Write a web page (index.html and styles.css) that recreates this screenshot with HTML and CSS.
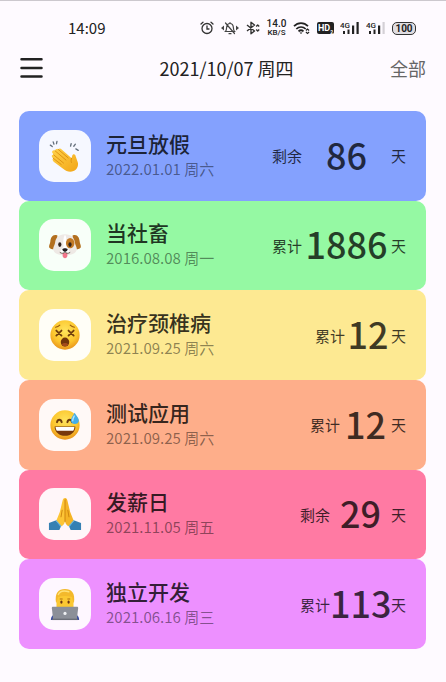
FILE: index.html
```html
<!DOCTYPE html>
<html lang="zh-CN">
<head>
    <meta charset="UTF-8">
    <meta name="viewport" content="width=device-width, initial-scale=1.0">
    <title>倒数日</title>
    <link rel="stylesheet" href="styles.css">
</head>
<body>
    <div class="status-bar">
        <span class="clock">14:09</span>
        <div class="status-icons">
            <svg width="14" height="14" viewBox="0 0 14 14" fill="none" stroke="#333" stroke-width="1.3" stroke-linecap="round">
                <circle cx="7" cy="7.5" r="5"/>
                <path d="M1 3L3 1.2M13 3L11 1.2M7 5v3h2"/>
            </svg>
            <svg width="20" height="14" viewBox="0 0 20 14" fill="none" stroke="#444" stroke-width="1.2" stroke-linecap="round">
                <path d="M5.5 10.5c1-1 1-2 1.200-4.500C7 3.500 8.500 2.500 10 2.500S13 3.500 13.300 6c.2 2.500.2 3.500 1.200 4.500zM9 12.700h2M10 1.500v1M5.500 2l9 10.500"/>
                <path d="M4 4.500L1 7l3 2.500zM16 4.500L19 7l-3 2.500z" fill="#444" stroke="none"/>
            </svg>
            <svg width="14" height="14" viewBox="0 0 14 14" fill="none" stroke="#333" stroke-width="1.4" stroke-linejoin="round">
                <path d="M1 4l7.500 6L5 12.700V1.300L8.500 4 1 10"/>
                <path d="M10.200 5.500l1.500-1.500 1.500 1.500M10.200 8.500l1.500 1.500 1.500-1.500"/>
            </svg>
            <div class="net-speed"><span>14.0</span><span class="unit">KB/S</span></div>
            <svg width="18" height="14" viewBox="0 0 18 14" fill="none" stroke="#222" stroke-width="1.700">
                <path d="M1 5.200C5 1 11 1 15 5.200M3.300 8C6 5.300 10 5.300 12.700 8M5.500 10.400c1.500-1.400 3.500-1.400 5 0"/>
                <path d="M6.500 11.500L8 13l1.500-1.500z" fill="#222" stroke="none"/>
                <path d="M12.900 9.500l1.600-1.500 1.600 1.500M12.900 11l1.600 1.500 1.600-1.500" stroke-width="1.100"/>
            </svg>
            <span class="hd">HD<sub>2</sub></span>
            <svg class="signal" width="20" height="14" viewBox="0 0 20 14" fill="#222">
                <text x="0" y="7">4G</text>
                <path d="M3 10h2v3H3zM7.500 8.500h2V13h-2zM12 4.500h2.200V13H12zM16.500 1h2.200v12h-2.200z"/>
            </svg>
            <svg class="signal" width="20" height="14" viewBox="0 0 20 14" fill="#222">
                <text x="0" y="7">4G</text>
                <path d="M3 10h2v3H3zM7.500 8.500h2V13h-2zM12 4.500h2.200V13H12z"/>
                <path d="M16.500 1h2.200v12h-2.200z" fill="#d4d0d6"/>
            </svg>
            <span class="battery">100</span>
        </div>
    </div>

    <header class="top-bar">
        <button class="menu-btn" aria-label="菜单">
            <svg width="23" height="22" viewBox="0 0 23 22" stroke="#222" stroke-width="2.500" stroke-linecap="round">
                <path d="M1.500 2.200h20M1.500 11h20M1.500 19.500h20"/>
            </svg>
        </button>
        <h1 class="today">2021/10/07 周四</h1>
        <button class="filter-btn">全部</button>
    </header>

    <ul class="day-list">
        <li class="day blue">
            <div class="icon">
                <svg width="34" height="34" viewBox="0 0 36 36">
                    <defs>
                        <linearGradient id="hand" x1="0" y1="0" x2="1" y2="1">
                            <stop offset="0" stop-color="#ffd34a"/>
                            <stop offset="1" stop-color="#f2a516"/>
                        </linearGradient>
                    </defs>
                    <path d="M4.500 19.500c-1.300-1.500 0-3.300 1.700-2.500L4.500 14.500c-.8-2 1.500-3.300 3-2 0-1.800 2-2.500 3.300-1.500 1-1.300 2.600-1 3.700 0l10.500 9.300.7-2.800c.9-2.200 3.300-1.700 3.500.6l2.300 6.400c1.200 3.500-1 8-4.500 9.500-4 1.500-7.500.3-11-2.500L6 24c-1.500-1.300-1.500-3-.3-3.500z" fill="url(#hand)"/>
                    <path d="M6 16.800l10.500 8.700M7.500 12.500l11.500 9.800M10.800 11l10.500 9M5.700 20.500l8.300 6.500M25 20.300c-.7 1.500-.7 3-.2 4.500" fill="none" stroke="#d98b0c" stroke-width=".9" stroke-linecap="round"/>
                    <path d="M2.500 6.500l2 1.500M5.500 3l.8 2.500M9.500 2.500l-.5 2.500M24.500 5l-.6 2.500M29 5.500l-1.700 2.200M29.500 10.500l2.500 1.500" stroke="#66717d" stroke-width="1.400" stroke-linecap="round"/>
                </svg>
            </div>
            <div class="info">
                <h2>元旦放假</h2>
                <p>2022.01.01 周六</p>
            </div>
            <div class="count"><span>剩余</span><strong class="w-xl">86</strong><span>天</span></div>
        </li>
        <li class="day green">
            <div class="icon">
                <svg width="34" height="34" viewBox="0 0 36 36">
                    <path d="M10 8C5 6 3 10 2.500 14c-.5 3.500-2 5-1 7 2 2.500 6 1.500 7.500-1zM26 8c5-2 7 2 7.500 6 .5 3.500 2 5 1 7-2 2.500-6 1.500-7.500-1z" fill="#b3701f"/>
                    <path d="M18 6.500c-7 0-10 4-10.500 9-.5 3-2.500 5-2 7.500 1 4 6 6 12.500 6s11.500-2 12.500-6c.5-2.500-1.500-4.500-2-7.500-.5-5-3.500-9-10.500-9z" fill="#eee9e5"/>
                    <path d="M18 7c-2 3-2 8-1.500 12 .3 2-4 4-3 7 2 2 7 2 9 0 1-3-3-5-3-7 0-5 .5-9-1.500-12z" fill="#fff"/>
                    <ellipse cx="23.500" cy="16" rx="4.500" ry="5.500" fill="#c27a25"/>
                    <ellipse cx="12.500" cy="17.500" rx="1.700" ry="2.500" fill="#30231e"/>
                    <ellipse cx="23.300" cy="17.500" rx="1.700" ry="2.500" fill="#30231e"/>
                    <path d="M15.500 26.500h5v3c0 3.300-5 3.300-5 0z" fill="#f2768b"/>
                    <path d="M12.500 25.800c2 1.500 4.500 1.200 5.500-.5 1 1.700 3.500 2 5.500.5" fill="none" stroke="#594941" stroke-width=".9"/>
                    <path d="M15.300 22.300c1-1.300 4.400-1.300 5.400 0 .5 1.300-1.700 3-2.700 3s-3.200-1.700-2.700-3z" fill="#211c20"/>
                </svg>
            </div>
            <div class="info">
                <h2>当社畜</h2>
                <p>2016.08.08 周一</p>
            </div>
            <div class="count"><span>累计</span><strong class="w-xl">1886</strong><span>天</span></div>
        </li>
        <li class="day yellow">
            <div class="icon">
                <svg width="34" height="34" viewBox="0 0 36 36">
                    <defs>
                        <radialGradient id="face" cx=".5" cy=".35" r=".65">
                            <stop offset="0" stop-color="#ffe45c"/>
                            <stop offset=".65" stop-color="#fcc62e"/>
                            <stop offset="1" stop-color="#e9951c"/>
                        </radialGradient>
                    </defs>
                    <circle cx="18" cy="18" r="15.500" fill="url(#face)"/>
                    <path d="M8.800 13.300l5.500 5.400M14.300 13.300l-5.500 5.400M21.700 13.300l5.500 5.400M27.200 13.300l-5.500 5.400" stroke="#6e3c0b" stroke-width="1.900" stroke-linecap="round"/>
                    <path d="M8 9.800c1.500-.3 3.200-1 4.500-2.200M28 9.800c-1.500-.3-3.200-1-4.500-2.200" fill="none" stroke="#9c5c0e" stroke-width="1.200" stroke-linecap="round"/>
                    <ellipse cx="18" cy="25.500" rx="4.500" ry="4.800" fill="#71350b"/>
                    <path d="M14.500 28c1.800-2 5.200-2 7 0-1.500 2.800-5.500 2.800-7 0z" fill="#a34b1b"/>
                </svg>
            </div>
            <div class="info">
                <h2>治疗颈椎病</h2>
                <p>2021.09.25 周六</p>
            </div>
            <div class="count"><span>累计</span><strong class="w-sm">12</strong><span>天</span></div>
        </li>
        <li class="day orange">
            <div class="icon">
                <svg width="34" height="34" viewBox="0 0 36 36">
                    <circle cx="18" cy="18" r="15.500" fill="url(#face)"/>
                    <path d="M9.500 15c.8-3.500 4.200-3.500 5 0M20.500 15c.8-3.500 4.200-3.500 5 0" fill="none" stroke="#6e3c0b" stroke-width="2" stroke-linecap="round"/>
                    <path d="M7 19.500h22c0 6-5 10-11 10s-11-4-11-10z" fill="#77380c"/>
                    <path d="M8 20h20c-.2 2-.7 3.300-1.500 4.200h-17C8.700 23.300 8.200 22 8 20z" fill="#fff"/>
                    <path d="M28.200 5c-1.500 3-4 5.500-4 8.300 0 5 8.500 5 8.500 0 0-2.800-3-5.300-4.500-8.300z" fill="#42aeea"/>
                    <path d="M27.800 8.500c-1 2-1.800 3.300-1.600 5" fill="none" stroke="#b6e6fb" stroke-width="1.400" stroke-linecap="round"/>
                </svg>
            </div>
            <div class="info">
                <h2>测试应用</h2>
                <p>2021.09.25 周六</p>
            </div>
            <div class="count"><span>累计</span><strong class="w-md">12</strong><span>天</span></div>
        </li>
        <li class="day pink">
            <div class="icon">
                <svg width="34" height="34" viewBox="0 0 36 36">
                    <path d="M1 27.500l7-2.500 6 5.500-2 4.500H1zM35 27.500L28 25l-6 5.500 2 4.500h11z" fill="#3580b3"/>
                    <path d="M8 25l2-1.300 5 5.300-1.500 3zM28 25l-2-1.300-5 5.300 1.500 3z" fill="#66b3dc"/>
                    <path d="M18 1c-1.500 0-2.300 1.200-2.600 3L12.500 16l-3.500 8.500 5.500 6.500c2.500-1.300 3.300-3.500 3.500-6z" fill="#fdc536"/>
                    <path d="M18 1c1.500 0 2.300 1.200 2.600 3L23.500 16l3.500 8.500-5.500 6.500c-2.500-1.300-3.300-3.500-3.500-6z" fill="#f5b425"/>
                    <path d="M18 3v23M15 14l-1.200 7M21 14l1.200 7" fill="none" stroke="#c77c0b" stroke-width=".9" stroke-linecap="round"/>
                </svg>
            </div>
            <div class="info">
                <h2>发薪日</h2>
                <p>2021.11.05 周五</p>
            </div>
            <div class="count"><span>剩余</span><strong class="w-lg">29</strong><span>天</span></div>
        </li>
        <li class="day purple">
            <div class="icon">
                <svg width="34" height="34" viewBox="0 0 36 36">
                    <path d="M3 35c0-4 2-6 6-6.500h18c4 .5 6 2.500 6 6.500z" fill="#3a4da0"/>
                    <path d="M9 12C9 2 27 2 27 12v9c-1 4-4 7-9 7s-8-3-9-7z" fill="#fbc832"/>
                    <path d="M8.500 17C7 6 11 2 18 2s11 4 9.500 15c-1.200-1.500-1.500-3.500-2-6.500-5-1.300-10-1.300-15 0-.5 3-.8 5-2 6.500z" fill="#f3b92c"/>
                    <path d="M11 8c1.500-3.500 6-4.500 11-3" fill="none" stroke="#ffe27a" stroke-width="1.500" stroke-linecap="round"/>
                    <path d="M12.500 12.700h3M20.500 12.700h3" stroke="#a9680e" stroke-width="1"/>
                    <ellipse cx="14.200" cy="16" rx="1.200" ry="1.700" fill="#6b3413"/>
                    <ellipse cx="21.800" cy="16" rx="1.200" ry="1.700" fill="#6b3413"/>
                    <path d="M5.500 21h25c1 0 1.500.5 1.400 1.500L30.500 35h-25L4.100 22.500C4 21.500 4.500 21 5.500 21z" fill="#8b8f98"/>
                    <path d="M4.500 33.500h27V35h-27z" fill="#6b6f78"/>
                    <circle cx="18" cy="28" r="1.700" fill="#eef0f3"/>
                </svg>
            </div>
            <div class="info">
                <h2>独立开发</h2>
                <p>2021.06.16 周三</p>
            </div>
            <div class="count"><span>累计</span><strong class="w-lg">113</strong><span>天</span></div>
        </li>
    </ul>
</body>
</html>
```
FILE: styles.css
```css
* {
    box-sizing: border-box;
    margin: 0;
    padding: 0;
}
body {
    display: flex;
    flex-direction: column;
    min-height: 100vh;
    padding: 13px 20px 33px 19px;
    border-top: 1px solid #ccc8ce;
    background-color: #fefaff;
    color: #222;
    font-family: "Noto Sans CJK SC", sans-serif;
}
svg {
    display: block;
    flex-shrink: 0;
}
button {
    border: none;
    background: none;
    font-family: inherit;
    cursor: pointer;
}

/* status bar */
.status-bar {
    display: flex;
    justify-content: space-between;
    align-items: center;
    height: 28px;
    padding: 0 10px 0 49px;
}
.clock {
    padding-bottom: 2px;
    font-size: 15px;
}
.status-icons {
    display: flex;
    align-items: center;
    gap: 6px;
}
.net-speed {
    display: flex;
    flex-direction: column;
    align-items: center;
    width: 21px;
    font-family: Roboto, sans-serif;
    font-size: 10px;
    font-weight: 500;
    line-height: 9px;
}
.net-speed .unit {
    font-size: 8px;
}
.hd {
    width: 17px;
    height: 12px;
    border-radius: 2px;
    background-color: #222;
    color: #fff;
    font-family: Roboto, sans-serif;
    font-size: 9px;
    font-weight: 700;
    line-height: 12px;
    text-align: center;
}
.hd sub {
    font-size: 5px;
    line-height: 1;
}
.signal text {
    font-family: Roboto, sans-serif;
    font-size: 8px;
    font-weight: 500;
}
.battery {
    width: 24px;
    height: 13px;
    border: 1px solid #333;
    border-radius: 5px;
    background-color: #e0dde2;
    font-family: Roboto, sans-serif;
    font-size: 10px;
    font-weight: 700;
    line-height: 11px;
    text-align: center;
}

/* header */
.top-bar {
    display: flex;
    align-items: center;
    height: 28px;
    margin: 12px 0 29px;
}
.menu-btn {
    width: 44px;
    padding-left: 1px;
}
.today {
    flex: 1;
    font-size: 18px;
    font-weight: 400;
    text-align: center;
}
.filter-btn {
    color: #666;
    font-size: 18px;
}

/* list */
.day-list {
    display: grid;
    flex: 1;
    grid-auto-rows: 1fr;
    list-style: none;
}
.day {
    display: flex;
    align-items: center;
    gap: 15px;
    padding: 18px 20px;
    border-radius: 10px;
}
.blue {
    background-color: #84a1fe;
}
.green {
    background-color: #95f9a3;
}
.yellow {
    background-color: #fde992;
}
.orange {
    background-color: #feae8a;
}
.pink {
    background-color: #ff7aa3;
}
.purple {
    background-color: #ed90ff;
}
.icon {
    display: flex;
    justify-content: center;
    align-items: center;
    width: 52px;
    height: 52px;
    border-radius: 15px;
    background-color: rgba(255, 255, 255, 0.93);
}
.info {
    flex: 1;
}
.info h2 {
    color: rgba(0, 0, 0, 0.8);
    font-size: 21px;
    font-weight: 500;
    line-height: 26px;
}
.info p {
    color: rgba(0, 0, 0, 0.45);
    font-size: 15px;
    line-height: 26px;
}
.count {
    display: flex;
    align-items: center;
    color: rgba(0, 0, 0, 0.75);
    font-size: 15px;
}
.count strong {
    padding-bottom: 4px;
    font-size: 36px;
    font-weight: 500;
    line-height: 48px;
    text-align: center;
}
.w-sm {
    width: 46px;
}
.w-md {
    width: 51px;
}
.w-lg {
    width: 61px;
}
.w-xl {
    width: 89px;
}
```
